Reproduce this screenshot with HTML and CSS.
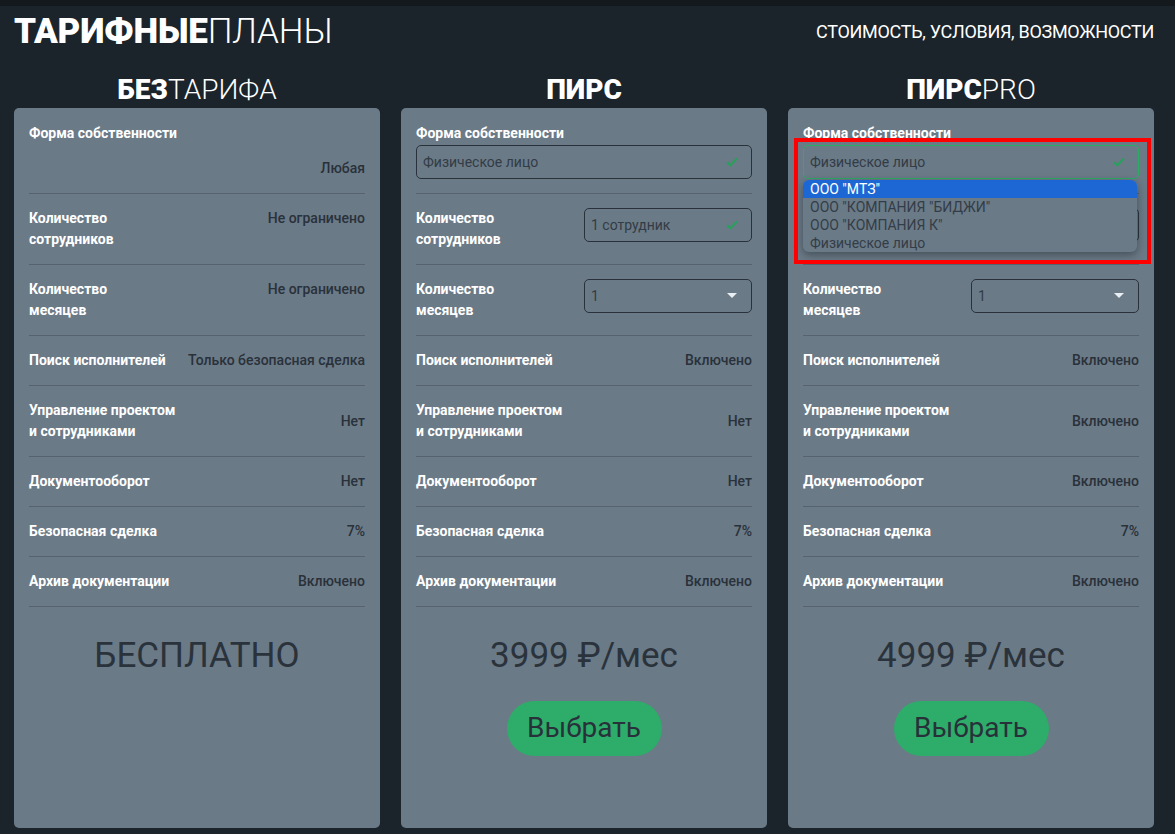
FILE: index.html
```html
<!DOCTYPE html>
<html lang="ru">
<head>
<meta charset="utf-8">
<title>Тарифные планы</title>
<link rel="stylesheet" href="styles.css">
</head>
<body>
<div class="topstrip"></div>
<header class="header">
  <h1 class="title"><b>ТАРИФНЫЕ</b><span class="light">ПЛАНЫ</span></h1>
  <div class="subtitle">СТОИМОСТЬ, УСЛОВИЯ, ВОЗМОЖНОСТИ</div>
</header>
<main class="plans">
  <section class="plan">
    <h2 class="plan-name"><b>БЕЗ</b><span class="light">ТАРИФА</span></h2>
    <div class="card">
      <div class="row row-stack">
        <div class="label">Форма собственности</div>
        <div class="value value-stack">Любая</div>
      </div>
      <div class="row row-top">
        <div class="label">Количество<br>сотрудников</div>
        <div class="value">Не ограничено</div>
      </div>
      <div class="row row-top">
        <div class="label">Количество<br>месяцев</div>
        <div class="value">Не ограничено</div>
      </div>
      <div class="row"><div class="label">Поиск исполнителей</div><div class="value">Только безопасная сделка</div></div>
      <div class="row"><div class="label">Управление проектом<br>и сотрудниками</div><div class="value">Нет</div></div>
      <div class="row"><div class="label">Документооборот</div><div class="value">Нет</div></div>
      <div class="row"><div class="label">Безопасная сделка</div><div class="value">7%</div></div>
      <div class="row"><div class="label">Архив документации</div><div class="value">Включено</div></div>
      <div class="price">БЕСПЛАТНО</div>
    </div>
  </section>

  <section class="plan">
    <h2 class="plan-name"><b>ПИРС</b></h2>
    <div class="card">
      <div class="row row-stack">
        <div class="label">Форма собственности</div>
        <div class="select select-full"><span>Физическое лицо</span>
          <svg class="check" width="12" height="10" viewBox="0 0 12 10"><path d="M1 5.2 L4.3 8.3 L11 1.5" fill="none" stroke="#27a05c" stroke-width="2"/></svg>
        </div>
      </div>
      <div class="row row-top">
        <div class="label">Количество<br>сотрудников</div>
        <div class="select select-half"><span>1 сотрудник</span>
          <svg class="check" width="12" height="10" viewBox="0 0 12 10"><path d="M1 5.2 L4.3 8.3 L11 1.5" fill="none" stroke="#27a05c" stroke-width="2"/></svg>
        </div>
      </div>
      <div class="row row-top">
        <div class="label">Количество<br>месяцев</div>
        <div class="select select-half"><span>1</span>
          <svg class="caret" width="10" height="6" viewBox="0 0 10 6"><path d="M0 0 H10 L5 5 Z" fill="#e9eef2"/></svg>
        </div>
      </div>
      <div class="row"><div class="label">Поиск исполнителей</div><div class="value">Включено</div></div>
      <div class="row"><div class="label">Управление проектом<br>и сотрудниками</div><div class="value">Нет</div></div>
      <div class="row"><div class="label">Документооборот</div><div class="value">Нет</div></div>
      <div class="row"><div class="label">Безопасная сделка</div><div class="value">7%</div></div>
      <div class="row"><div class="label">Архив документации</div><div class="value">Включено</div></div>
      <div class="price">3999 ₽/мес</div>
      <button class="choose">Выбрать</button>
    </div>
  </section>

  <section class="plan">
    <h2 class="plan-name"><b>ПИРС</b><span class="light">PRO</span></h2>
    <div class="card card-open">
      <div class="row row-stack">
        <div class="label">Форма собственности</div>
        <div class="select select-full select-focus"><span>Физическое лицо</span>
          <svg class="check" width="12" height="10" viewBox="0 0 12 10"><path d="M1 5.2 L4.3 8.3 L11 1.5" fill="none" stroke="#27a05c" stroke-width="2"/></svg>
        </div>
      </div>
      <div class="row row-top">
        <div class="label">Количество<br>сотрудников</div>
        <div class="select select-half"><span>1 сотрудник</span>
          <svg class="check" width="12" height="10" viewBox="0 0 12 10"><path d="M1 5.2 L4.3 8.3 L11 1.5" fill="none" stroke="#27a05c" stroke-width="2"/></svg>
        </div>
      </div>
      <div class="row row-top">
        <div class="label">Количество<br>месяцев</div>
        <div class="select select-half"><span>1</span>
          <svg class="caret" width="10" height="6" viewBox="0 0 10 6"><path d="M0 0 H10 L5 5 Z" fill="#e9eef2"/></svg>
        </div>
      </div>
      <div class="row"><div class="label">Поиск исполнителей</div><div class="value">Включено</div></div>
      <div class="row"><div class="label">Управление проектом<br>и сотрудниками</div><div class="value">Включено</div></div>
      <div class="row"><div class="label">Документооборот</div><div class="value">Включено</div></div>
      <div class="row"><div class="label">Безопасная сделка</div><div class="value">7%</div></div>
      <div class="row"><div class="label">Архив документации</div><div class="value">Включено</div></div>
      <div class="price">4999 ₽/мес</div>
      <button class="choose">Выбрать</button>

      <ul class="dropdown">
        <li class="option option-active">ООО "МТЗ"</li>
        <li class="option">ООО "КОМПАНИЯ "БИДЖИ"</li>
        <li class="option">ООО "КОМПАНИЯ К"</li>
        <li class="option">Физическое лицо</li>
      </ul>
      <div class="highlight"></div>
    </div>
  </section>
</main>
</body>
</html>
```

FILE: styles.css
```css
* { box-sizing: border-box; }

html, body {
  margin: 0;
  padding: 0;
}

body {
  background: #1b242a;
  font-family: Roboto, "Noto Sans", "Liberation Sans", sans-serif;
  color: #fff;
  height: 834px;
  overflow: hidden;
}

.topstrip {
  height: 6px;
  background: #13191d;
}

.header {
  display: flex;
  align-items: center;
  justify-content: space-between;
  height: 52px;
  padding: 0 21px 0 14px;
}

.title {
  margin: 0;
  font-size: 35px;
  line-height: 40px;
  font-weight: 700;
  letter-spacing: -0.15px;
}

.light { font-weight: 300; }

.subtitle {
  font-size: 18px;
  line-height: 24px;
  font-weight: 400;
  letter-spacing: -0.3px;
}

.plans {
  display: grid;
  grid-template-columns: repeat(3, 366px);
  column-gap: 21px;
  padding: 0 21px 0 14px;
}

.plan {
  display: flex;
  flex-direction: column;
}

.plan-name {
  margin: 16px 0 2px;
  font-size: 28px;
  line-height: 32px;
  text-align: center;
  font-weight: 700;
}

.card {
  position: relative;
  background: #6b7a87;
  border-radius: 5px;
  height: 720px;
  padding: 1px 15px 0;
  display: flex;
  flex-direction: column;
  align-items: stretch;
}

.row {
  display: flex;
  justify-content: space-between;
  align-items: center;
  padding: 14px 0;
  border-bottom: 1px solid #56636f;
  font-size: 14px;
  line-height: 21px;
}

.row-top { align-items: flex-start; }

.row-stack {
  flex-direction: column;
  align-items: stretch;
}

.label {
  font-weight: 700;
  color: #fff;
}

.value {
  font-weight: 500;
  color: #29313a;
  text-align: right;
}

.value-stack { margin-top: 14px; }

.select {
  display: flex;
  align-items: center;
  justify-content: space-between;
  height: 34px;
  border: 1px solid #29323b;
  border-radius: 5px;
  padding: 0 13px 0 6px;
  color: #323c46;
  font-size: 14px;
  font-weight: 400;
}

.select-full { margin-top: 1px; }

.select-half { width: 168px; }

.select-focus { border-color: #2bad66; }

.caret { margin-right: 1px; }

.price {
  margin-top: 28px;
  text-align: center;
  font-size: 35px;
  line-height: 42px;
  font-weight: 400;
  color: #2a333b;
}

.choose {
  align-self: center;
  margin-top: 24px;
  width: 155px;
  height: 55px;
  border: none;
  border-radius: 28px;
  background: #2eac69;
  color: #28313a;
  font-family: inherit;
  font-size: 28px;
  font-weight: 400;
  padding: 0 0 2px;
}

.dropdown {
  position: absolute;
  left: 15px;
  top: 72px;
  width: 334px;
  margin: 0;
  padding: 0;
  list-style: none;
  background: #6b7a87;
  border-radius: 6px;
  box-shadow: 0 3px 8px rgba(20, 28, 34, 0.45);
  overflow: hidden;
}

.option {
  height: 18px;
  line-height: 18px;
  padding: 0 7px;
  font-size: 14px;
  color: #333d47;
  white-space: nowrap;
}

.option-active {
  background: #1d67d5;
  color: #fff;
}

.highlight {
  position: absolute;
  left: 6px;
  top: 30px;
  width: 357px;
  height: 126px;
  border: 4px solid #ff0000;
}
```
